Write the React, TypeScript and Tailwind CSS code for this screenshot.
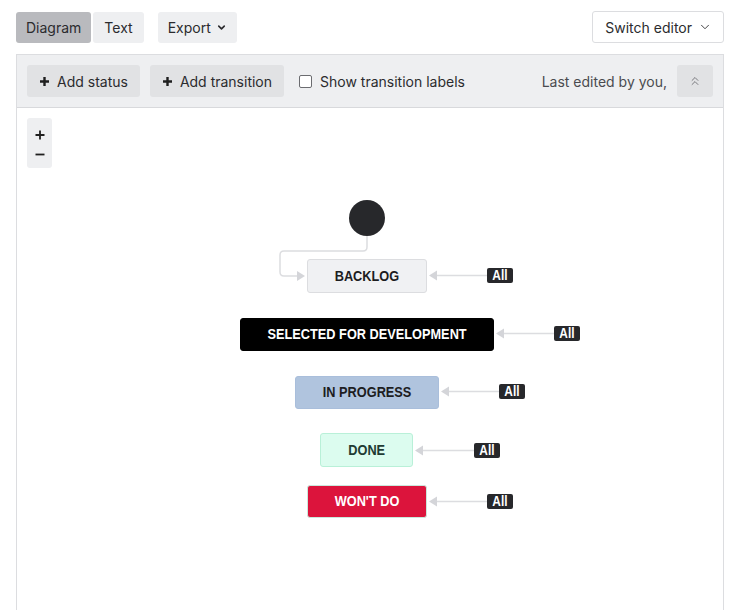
import { ChevronDown, ChevronsUp } from "lucide-react";

const nodes = [
  { label: "BACKLOG", x: 290, y: 151, w: 120, h: 34, cls: "bg-[#f0f1f3] border-[#dcdde0] text-[#1d1d1f]", all: { x: 470, y: 160 } },
  { label: "SELECTED FOR DEVELOPMENT", x: 223, y: 210, w: 254, h: 33, cls: "bg-black border-black text-white", all: { x: 537, y: 218 } },
  { label: "IN PROGRESS", x: 278, y: 268, w: 144, h: 33, cls: "bg-[#b0c4de] border-[#a9bedb] text-[#1d1d1f]", all: { x: 482, y: 276 } },
  { label: "DONE", x: 303, y: 325, w: 93, h: 34, cls: "bg-[#dcfcef] border-[#b9f0d8] text-[#1f3b33]", all: { x: 457, y: 335 } },
  { label: "WON'T DO", x: 290, y: 377, w: 120, h: 33, cls: "bg-[#dc143c] border-[#c9e9dc] text-white", all: { x: 470, y: 386 } },
];

function Plus() {
  return (
    <svg width="11" height="11" viewBox="0 0 11 11" className="shrink-0">
      <path d="M5.5 1v9M1 5.5h9" stroke="#1f1f1f" strokeWidth="2.4" />
    </svg>
  );
}

function Edges() {
  return (
    <svg className="absolute inset-0 pointer-events-none" width="707" height="502">
      <g fill="none" stroke="#dcdde0" strokeWidth="1.5">
        <path d="M350 128 V139 Q350 143 346 143 H267 Q263 143 263 147 V164 Q263 168 267 168 H282" />
        {nodes.map((n) => (
          <path key={n.label} d={`M${n.all.x} ${n.all.y + 7.5} H${n.x + n.w + 8}`} />
        ))}
      </g>
      <g fill="#d4d5d9">
        <path d="M288 168 l-8 -5 v10 z" />
        {nodes.map((n) => (
          <path key={n.label} d={`M${n.x + n.w + 2} ${n.all.y + 7.5} l8 -5 v10 z`} />
        ))}
      </g>
    </svg>
  );
}

export default function App() {
  return (
    <div className="w-[737px] h-[610px] overflow-hidden bg-white text-[#2b2b2e] font-['Inter',sans-serif] text-[14px]">
      <div className="flex items-center pl-4 pr-[13px] pt-[11px] h-[43px]">
        <div className="flex gap-[2px]">
          <button className="h-[31px] px-[10px] rounded-[3px] bg-[#b9babe] text-[#2b2b2e]">Diagram</button>
          <button className="h-[31px] px-[11px] rounded-[3px] bg-[#eeeff1]">Text</button>
        </div>
        <button className="ml-[14px] h-[31px] px-[10px] rounded-[3px] bg-[#eeeff1] flex items-center gap-[5px]">
          Export
          <ChevronDown size={11} strokeWidth={3.5} />
        </button>
        <button className="ml-auto h-[32px] pl-[12px] pr-[11px] rounded-[3px] bg-white border border-[#dcdde0] flex items-center gap-[6px]">
          Switch editor
          <ChevronDown size={14} strokeWidth={1.5} />
        </button>
      </div>

      <div className="ml-4 mr-[13px] mt-[11px] border border-b-0 border-[#dcdde0] h-[560px] flex flex-col">
        <div className="h-[53px] bg-[#eeeff1] border-b border-[#d8d9dc] flex items-center pl-[10px] pr-[10px]">
          <button className="h-[32px] px-[12px] rounded-[3px] bg-[#e1e2e4] flex items-center gap-[7px]">
            <Plus />
            Add status
          </button>
          <button className="ml-[10px] h-[32px] px-[12px] rounded-[3px] bg-[#e1e2e4] flex items-center gap-[7px]">
            <Plus />
            Add transition
          </button>
          <label className="ml-[15px] flex items-center gap-[8px]">
            <span className="w-[13px] h-[13px] rounded-[2px] border border-[#6b6c70] bg-white" />
            Show transition labels
          </label>
          <span className="ml-auto text-[#4a4b4f]">Last edited by you,</span>
          <button className="ml-[10px] w-[36px] h-[32px] rounded-[3px] bg-[#e1e2e4] flex items-center justify-center">
            <ChevronsUp size={14} strokeWidth={1.5} className="text-[#6b6c70]" />
          </button>
        </div>

        <div className="relative flex-1">
          <div className="absolute left-[10px] top-[10px] w-[25px] h-[50px] rounded-[3px] bg-[#eeeff1] flex flex-col items-center justify-center gap-[13px]">
            <svg width="10" height="10" viewBox="0 0 10 10">
              <path d="M5 0.5v9M0.5 5h9" stroke="#1f1f1f" strokeWidth="1.8" />
            </svg>
            <svg width="10" height="3" viewBox="0 0 10 3">
              <path d="M0.5 1.5h9" stroke="#1f1f1f" strokeWidth="1.8" />
            </svg>
          </div>

          <Edges />

          <div className="absolute left-[332px] top-[92px] w-[36px] h-[36px] rounded-full bg-[#27282b]" />

          {nodes.map((n) => (
            <div key={n.label}>
              <div
                className={`absolute flex items-center justify-center rounded-[3px] border font-['Liberation_Sans',Arial,sans-serif] font-bold text-[15px] whitespace-nowrap ${n.cls}`}
                style={{ left: n.x, top: n.y, width: n.w, height: n.h }}
              >
                <span className="inline-block scale-x-[0.85]">{n.label}</span>
              </div>
              <div
                className="absolute w-[26px] h-[15px] rounded-[2px] bg-[#27282b] text-white font-['Liberation_Sans',Arial,sans-serif] font-bold text-[14px] leading-[15px] flex justify-center"
                style={{ left: n.all.x, top: n.all.y }}
              >
                <span className="inline-block scale-x-[0.85]">All</span>
              </div>
            </div>
          ))}
        </div>
      </div>
    </div>
  );
}
